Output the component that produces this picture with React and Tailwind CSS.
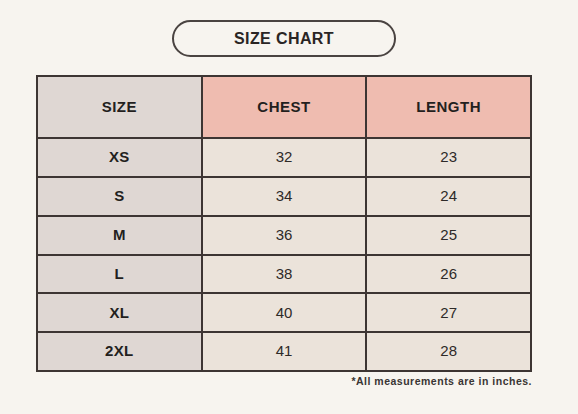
export default function App() {
    const rows = [
        ['XS', 32, 23],
        ['S', 34, 24],
        ['M', 36, 25],
        ['L', 38, 26],
        ['XL', 40, 27],
        ['2XL', 41, 28],
    ];

    return (
        <div className="w-[578px] h-[414px] bg-[#f7f4ef] text-[#231f1e] overflow-hidden" style={{ fontFamily: '"Liberation Sans", Arial, sans-serif' }}>
            <div className="w-[496px] ml-[36px] pt-[20px]">
                {/* Title pill */}
                <div className="mx-auto w-[224px] h-[37px] rounded-full border-2 border-[#4a4341] flex items-center justify-center">
                    <span className="text-[16px] font-bold tracking-[0.4px] text-[#2a2524]">SIZE CHART</span>
                </div>

                {/* Table */}
                <table className="mt-[18px] w-[496px] border-collapse table-fixed">
                    <thead>
                        <tr className="h-[62px]">
                            <th className="border-2 border-[#3d3533] bg-[#dfd7d3] text-[15px] font-bold tracking-[0.5px]">SIZE</th>
                            <th className="border-2 border-[#3d3533] bg-[#efbcb0] text-[15px] font-bold tracking-[0.5px]">CHEST</th>
                            <th className="border-2 border-[#3d3533] bg-[#efbcb0] text-[15px] font-bold tracking-[0.5px]">LENGTH</th>
                        </tr>
                    </thead>
                    <tbody>
                        {rows.map(([size, chest, length]) => (
                            <tr key={size} className="h-[38.85px]">
                                <td className="border-2 border-[#3d3533] bg-[#dfd7d3] text-center text-[15px] font-bold tracking-[0.3px]">{size}</td>
                                <td className="border-2 border-[#3d3533] bg-[#ebe3da] text-center text-[15px] text-[#2e2a28]">{chest}</td>
                                <td className="border-2 border-[#3d3533] bg-[#ebe3da] text-center text-[15px] text-[#2e2a28]">{length}</td>
                            </tr>
                        ))}
                    </tbody>
                </table>

                <p className="mt-[2px] text-right text-[10.5px] font-bold tracking-[0.5px] text-[#3a3534]">*All measurements are in inches.</p>
            </div>
        </div>
    );
}
